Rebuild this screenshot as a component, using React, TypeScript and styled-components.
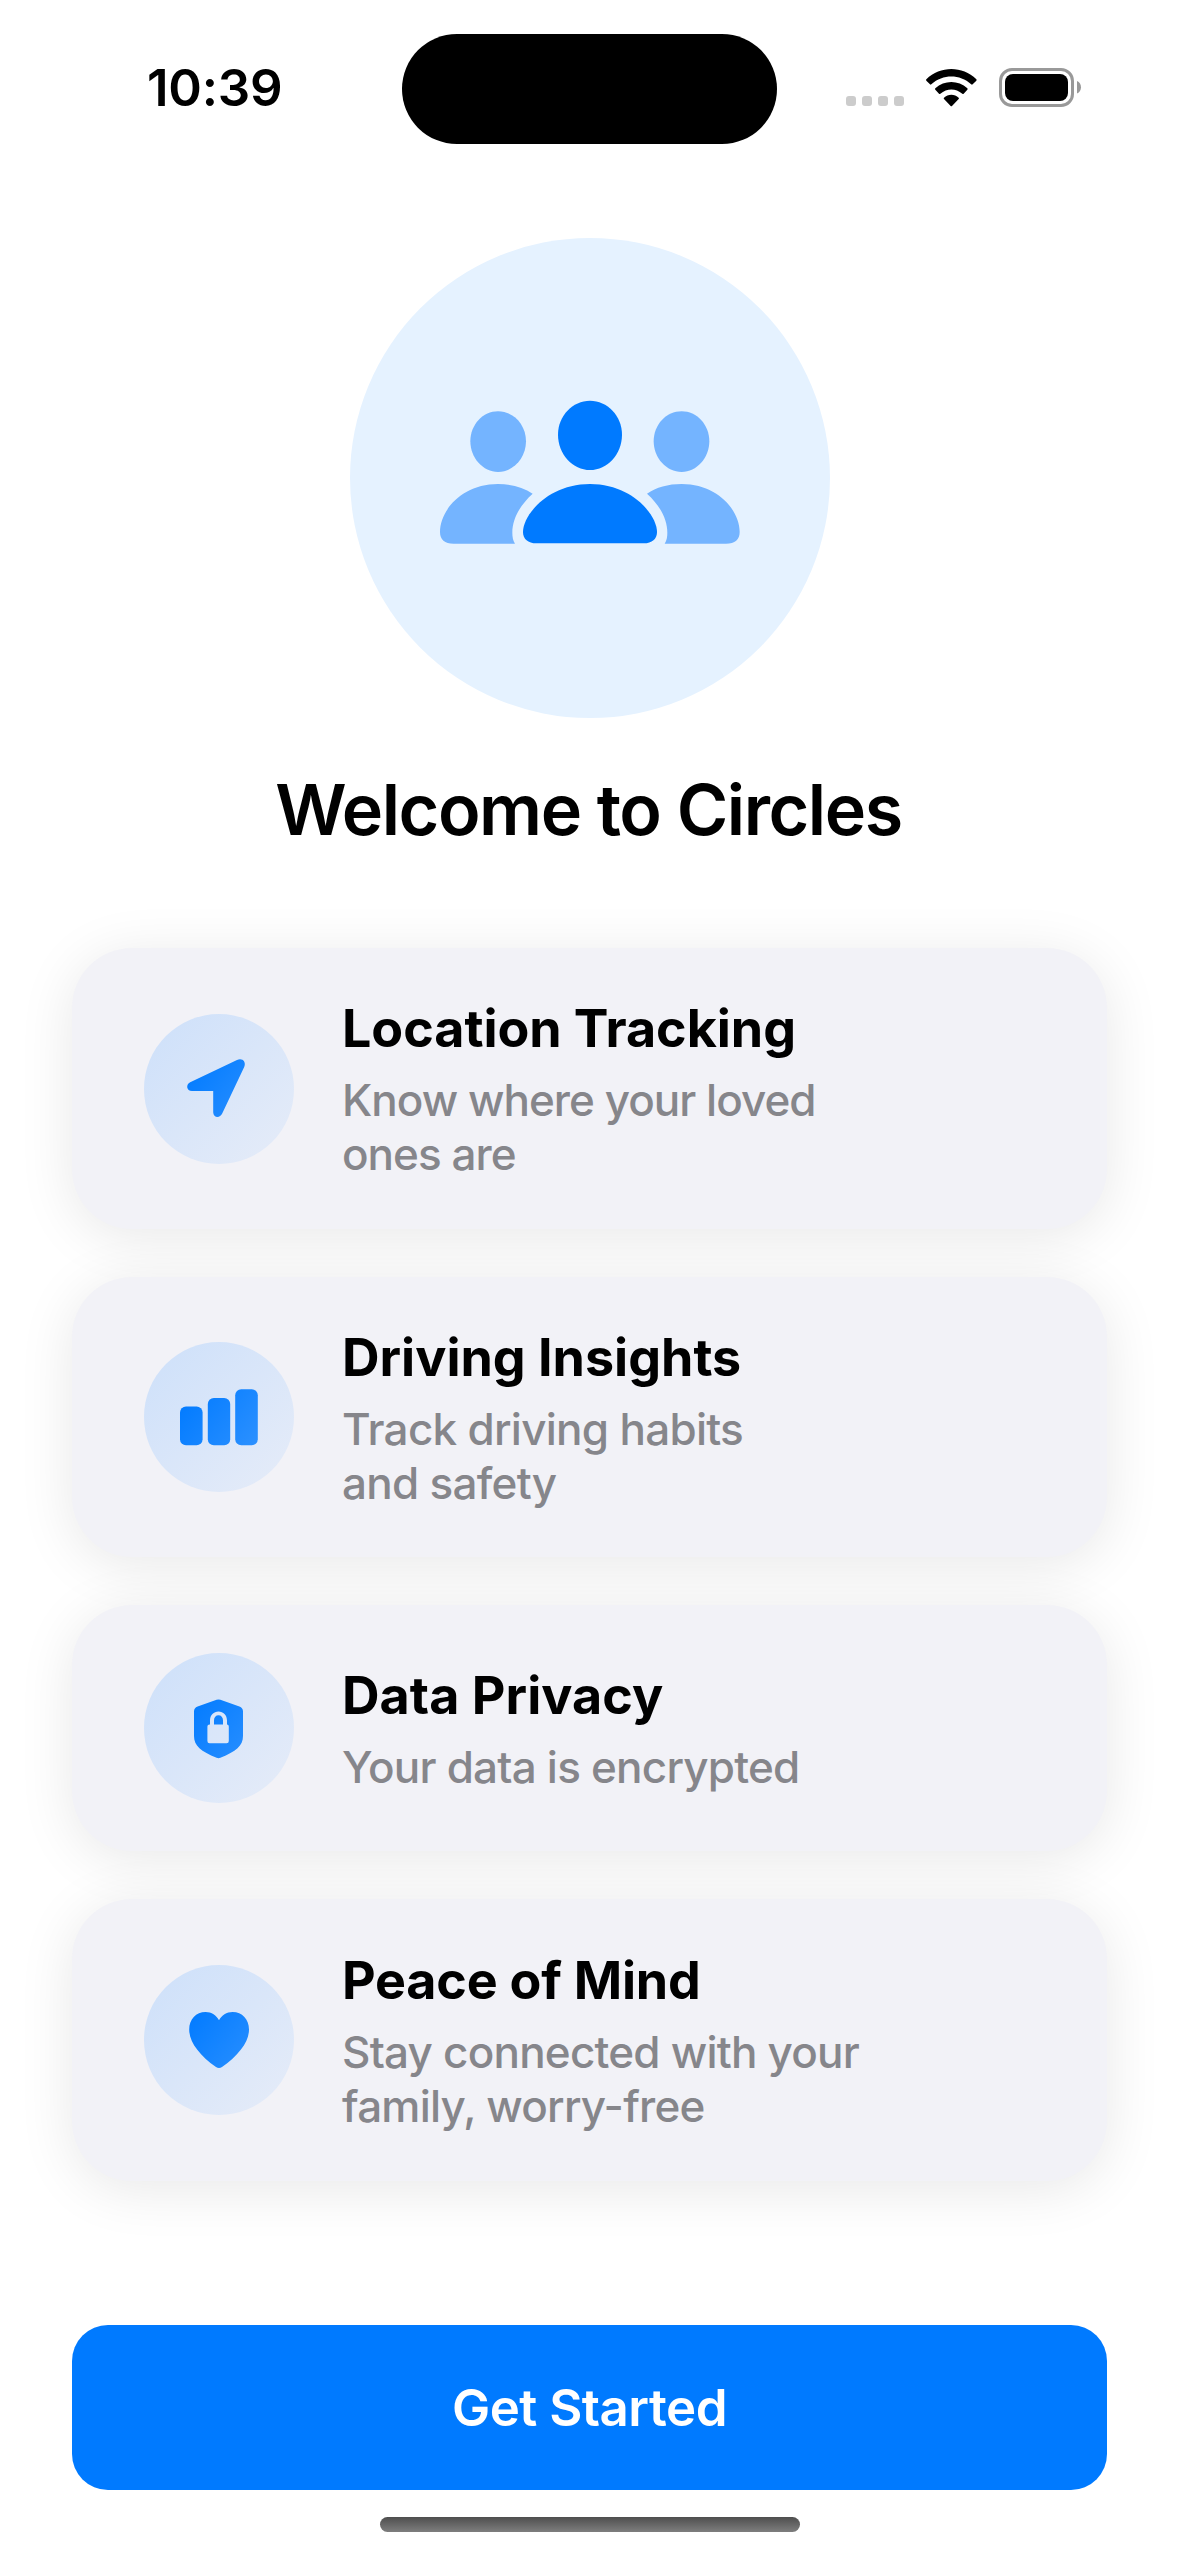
import React from "react";
import styled, { createGlobalStyle } from "styled-components";

const GlobalStyle = createGlobalStyle`
  * { box-sizing: border-box; }
  html, body { margin: 0; padding: 0; background: #fff; }
  body { font-family: Inter, Roboto, "Liberation Sans", sans-serif; color: #000; }
`;

const Screen = styled.main`
  width: 1179px;
  height: 2556px;
  display: flex;
  flex-direction: column;
  background: #fff;
  overflow: hidden;
`;

const StatusBar = styled.header`
  height: 177px;
  flex: none;
  display: grid;
  grid-template-columns: 402px 375px 402px;
  align-items: start;
`;

const Clock = styled.time`
  padding: 57px 0 0 147px;
  font-size: 51px;
  line-height: 62px;
  font-weight: 600;
  letter-spacing: -0.2px;
`;

const Island = styled.div`
  height: 110px;
  margin-top: 34px;
  border-radius: 55px;
  background: #000;
`;

const StatusIcons = styled.div`
  display: flex;
  align-items: flex-end;
  height: 107px;
  padding-left: 69px;
`;

const SignalDots = styled.div`
  display: flex;
  gap: 6px;
  margin: 0 22px 1px 0;
`;

const SignalDot = styled.span`
  width: 10px;
  height: 10px;
  border-radius: 3px;
  background: #ccc;
`;

const WifiGlyph = styled.svg`
  width: 51px;
  height: 38px;
  margin: 0 22px 0 0;
`;

const BatteryGlyph = styled.svg`
  width: 83px;
  height: 39px;
`;

const Hero = styled.section`
  display: flex;
  flex-direction: column;
  align-items: center;
  padding-top: 61px;
`;

const HeroBadge = styled.div`
  width: 480px;
  height: 480px;
  border-radius: 50%;
  background: #e5f2ff;
`;

const HeroTitle = styled.h1`
  margin: 49px 0 0;
  padding-right: 2px;
  font-size: 70px;
  line-height: 86px;
  font-weight: 600;
  letter-spacing: -1.45px;
  white-space: nowrap;
`;

const FeatureList = styled.ul`
  list-style: none;
  margin: 95px 72px 0;
  padding: 0;
  display: flex;
  flex-direction: column;
  gap: 48px;
`;

const FeatureCard = styled.li<{ $height: number }>`
  display: flex;
  align-items: center;
  gap: 48px;
  height: ${(p) => p.$height}px;
  padding: 0 72px;
  border-radius: 60px;
  background: #f2f2f7;
  box-shadow: 0 8px 56px rgba(0, 0, 0, 0.095);
`;

const IconBadge = styled.div`
  width: 150px;
  height: 150px;
  flex: none;
  border-radius: 50%;
  background: linear-gradient(135deg, #cde0fa 0%, #e6ecf8 100%);
`;

const Glyph = styled.svg`
  display: block;
  width: 100%;
  height: 100%;
`;

const FeatureText = styled.div`
  display: flex;
  flex-direction: column;
  gap: 12px;
  padding-top: 1px;
`;

const FeatureTitle = styled.h2<{ $tracking: number }>`
  margin: 0;
  font-size: 52px;
  line-height: 64px;
  font-weight: 700;
  letter-spacing: ${(p) => p.$tracking}px;
  white-space: nowrap;
`;

const FeatureBody = styled.p<{ $tracking: number }>`
  margin: 0;
  font-size: 44px;
  line-height: 54px;
  font-weight: 500;
  letter-spacing: ${(p) => p.$tracking}px;
  color: #86868b;
  white-space: pre-line;
`;

const StartButton = styled.button`
  height: 165px;
  flex: none;
  margin: auto 72px 0;
  border: 0;
  border-radius: 36px;
  background: #007aff;
  color: #fff;
  font-family: inherit;
  font-size: 51px;
  font-weight: 600;
  letter-spacing: -0.5px;
`;

const HomeIndicator = styled.div`
  width: 420px;
  height: 15px;
  flex: none;
  margin: 27px auto 24px;
  border-radius: 8px;
  background: linear-gradient(#4e4e4e, #7e7e7e);
`;

const SidePerson = () => (
  <>
    <path d="M504 573.5C550 573.5 588 613 588 664C588 714 550 756 504 756C459 756 421 714 421 664C421 613 459 573.5 504 573.5Z" />
    <path d="M371 971C344 971 330 959 330 936C330 872 395 792 504 792C545 792 580 802 608 821C570 855 547 897 547 938C547 950 549 962 555 971Z" />
  </>
);

const GroupIcon = () => (
  <Glyph viewBox="60 54 1440 1440">
    <g fill="#74b4ff">
      <SidePerson />
      <g transform="translate(1559 0) scale(-1 1)">
        <SidePerson />
      </g>
    </g>
    <g fill="#007aff">
      <path d="M780 542C832 542 876 587 876 644C876 702 832 750 780 750C728 750 684 702 684 644C684 587 728 542 780 542Z" />
      <path d="M619 970C594 970 579 957 579 936C579 885 654 792 780 792C906 792 981 885 981 936C981 957 966 970 941 970Z" />
    </g>
  </Glyph>
);

const BlueFade = ({ id }: { id: string }) => (
  <defs>
    <linearGradient id={id} gradientUnits="userSpaceOnUse" x1="40" y1="50" x2="110" y2="105">
      <stop offset="0" stopColor="#007aff" />
      <stop offset="1" stopColor="#2b90ff" />
    </linearGradient>
  </defs>
);

const ArrowIcon = () => (
  <Glyph viewBox="0 0 150 150">
    <BlueFade id="fade-arrow" />
    <path
      fill="url(#fade-arrow)"
      d="M93 45.9C98 43.4 102.6 47.4 100.2 53L78.2 99.6C75.7 104.8 69.2 103.6 69.2 98.2V77H48C42.4 77 41.6 70.4 46.2 68.2Z"
    />
  </Glyph>
);

const BarsIcon = () => (
  <Glyph viewBox="0 0 150 150">
    <BlueFade id="fade-bars" />
    <g fill="url(#fade-bars)">
      <rect x="36" y="64.6" width="22.6" height="38.6" rx="6" />
      <rect x="63.8" y="56" width="22.4" height="47.2" rx="6" />
      <rect x="91.2" y="47.3" width="22.6" height="55.9" rx="6" />
    </g>
  </Glyph>
);

const ShieldIcon = () => (
  <Glyph viewBox="0 0 150 150">
    <BlueFade id="fade-shield" />
    <path
      fill="url(#fade-shield)"
      fillRule="evenodd"
      d="M72.6 46.8Q74.5 46 76.4 46.8L95.4 53.6Q99 55 99 58.6V83C99 93 92 98.3 76.4 104.8Q74.5 105.6 72.6 104.8C57 98.3 50 93 50 83V58.6Q50 55 53.6 53.6ZM66 71.4H65.5Q63.4 71.4 63.4 73.5V88Q63.4 90.2 65.5 90.2H82.6Q84.8 90.2 84.8 88V73.5Q84.8 71.4 83 71.4V67.5C83 62 79.2 58.4 74.5 58.4C69.8 58.4 66 62 66 67.5ZM70 71.4V67.2C70 64.2 71.8 62.2 74.5 62.2C77.2 62.2 79 64.2 79 67.2V71.4Z"
    />
  </Glyph>
);

const HeartIcon = () => (
  <Glyph viewBox="0 0 150 150">
    <BlueFade id="fade-heart" />
    <path
      fill="url(#fade-heart)"
      d="M75 55.3C72.5 50.3 67.5 47 61.6 47C52 47 45.2 54.2 45.2 64.6C45.2 77 55.5 90.5 72 102Q75 104 78 102C94.5 90.5 105 77 105 64.6C105 54.2 98.2 47 88.6 47C82.7 47 77.5 50.3 75 55.3Z"
    />
  </Glyph>
);

const features = [
  {
    title: "Location Tracking",
    titleTracking: -0.05,
    body: "Know where your loved\nones are",
    bodyTracking: -0.97,
    icon: ArrowIcon,
    height: 281,
  },
  {
    title: "Driving Insights",
    titleTracking: 0,
    body: "Track driving habits\nand safety",
    bodyTracking: -0.72,
    icon: BarsIcon,
    height: 280,
  },
  {
    title: "Data Privacy",
    titleTracking: 0.05,
    body: "Your data is encrypted",
    bodyTracking: -0.78,
    icon: ShieldIcon,
    height: 246,
  },
  {
    title: "Peace of Mind",
    titleTracking: -0.22,
    body: "Stay connected with your\nfamily, worry-free",
    bodyTracking: -0.78,
    icon: HeartIcon,
    height: 282,
  },
];

export default function App() {
  return (
    <>
      <GlobalStyle />
      <Screen>
        <StatusBar>
          <Clock>10:39</Clock>
          <Island />
          <StatusIcons>
            <SignalDots>
              <SignalDot />
              <SignalDot />
              <SignalDot />
              <SignalDot />
            </SignalDots>
            <WifiGlyph viewBox="319 86 153 114">
              <path d="M320 117C362 76 428 76 470 117Q471.5 119 470 121L459 132Q457 134 454.5 132C420 101 370 101 335 132Q333 134 331 132L320 121Q318.5 119 320 117Z" />
              <path d="M347 144C374 119 416 119 443 144Q445 146 443 148L432 160Q430 162 428 160C408 143 382 143 362 160Q360 162 358 160L347 148Q345 146 347 144Z" />
              <path d="M373 172C385 160 405 160 417 172Q419 174 417 176L397 197Q395 199 393 197L373 176Q371 174 373 172Z" />
            </WifiGlyph>
            <BatteryGlyph viewBox="0 0 83 39">
              <rect x="1.5" y="1.5" width="72" height="36" rx="11.5" fill="none" stroke="#999" strokeWidth="3" />
              <rect x="6" y="6" width="63" height="27" rx="8" />
              <path d="M78 13C83.3 15 83.3 23.5 78 25.5Z" fill="#999" />
            </BatteryGlyph>
          </StatusIcons>
        </StatusBar>
        <Hero>
          <HeroBadge>
            <GroupIcon />
          </HeroBadge>
          <HeroTitle>Welcome to Circles</HeroTitle>
        </Hero>
        <FeatureList>
          {features.map(({ title, titleTracking, body, bodyTracking, icon: Icon, height }) => (
            <FeatureCard key={title} $height={height}>
              <IconBadge>
                <Icon />
              </IconBadge>
              <FeatureText>
                <FeatureTitle $tracking={titleTracking}>{title}</FeatureTitle>
                <FeatureBody $tracking={bodyTracking}>{body}</FeatureBody>
              </FeatureText>
            </FeatureCard>
          ))}
        </FeatureList>
        <StartButton>Get Started</StartButton>
        <HomeIndicator />
      </Screen>
    </>
  );
}
